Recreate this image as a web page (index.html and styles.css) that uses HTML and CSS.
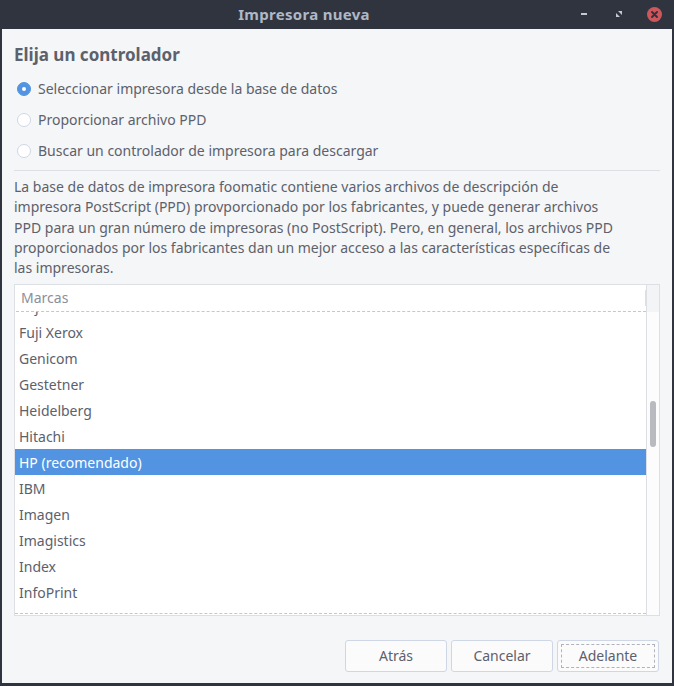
FILE: index.html
```html
<!DOCTYPE html>
<html lang="es">
<head>
<meta charset="utf-8">
<title>Impresora nueva</title>
<link rel="stylesheet" href="styles.css">
</head>
<body>
<div class="window">
  <header class="titlebar">
    <div class="title">Impresora nueva</div>
    <div class="controls">
      <span class="btn-min"></span>
      <svg class="btn-max" width="6" height="6" viewBox="0 0 6 6"><polygon points="2,0 6,0 6,4" fill="#c4cad3"/><polygon points="0,2 0,6 4,6" fill="#c4cad3"/></svg>
      <svg class="btn-close" width="15" height="15" viewBox="0 0 15 15"><circle cx="7.5" cy="7.5" r="7.5" fill="#cc575d"/><path d="M5 5 L10 10 M10 5 L5 10" stroke="#2f343f" stroke-width="2" stroke-linecap="round"/></svg>
    </div>
  </header>
  <main class="content">
    <h1 class="heading">Elija un controlador</h1>
    <div class="radios">
      <label class="radio"><span class="dot checked"></span>Seleccionar impresora desde la base de datos</label>
      <label class="radio"><span class="dot"></span>Proporcionar archivo PPD</label>
      <label class="radio"><span class="dot"></span>Buscar un controlador de impresora para descargar</label>
    </div>
    <div class="sep"></div>
    <p class="desc">La base de datos de impresora foomatic contiene varios archivos de descripción de<br>impresora PostScript (PPD) provporcionado por los fabricantes, y puede generar archivos<br>PPD para un gran número de impresoras (no PostScript). Pero, en general, los archivos PPD<br>proporcionados por los fabricantes dan un mejor acceso a las características específicas de<br>las impresoras.</p>
    <div class="listbox">
      <div class="list-main">
        <div class="list-header"><span class="col">Marcas</span></div>
        <div class="viewport">
          <ul class="rows">
            <li>Fujifilm</li>
            <li>Fuji Xerox</li>
            <li>Genicom</li>
            <li>Gestetner</li>
            <li>Heidelberg</li>
            <li>Hitachi</li>
            <li class="selected">HP (recomendado)</li>
            <li>IBM</li>
            <li>Imagen</li>
            <li>Imagistics</li>
            <li>Index</li>
            <li>InfoPrint</li>
            <li>Infotec</li>
          </ul>
        </div>
      </div>
      <div class="scrollbar">
        <div class="sb-head"></div>
        <div class="sb-track"><div class="thumb"></div></div>
      </div>
    </div>
    <div class="buttons">
      <button class="button">Atrás</button>
      <button class="button">Cancelar</button>
      <button class="button focus"><span class="ring">Adelante</span></button>
    </div>
  </main>
</div>
</body>
</html>
```
FILE: styles.css
```css
* { box-sizing: border-box; }
html, body { margin: 0; padding: 0; }
body {
  width: 674px;
  height: 686px;
  overflow: hidden;
  font-family: "Noto Sans", "Open Sans", sans-serif;
  font-size: 14px;
  color: #5c616c;
  background: #2f343f;
}
.window {
  width: 674px;
  height: 686px;
  display: flex;
  flex-direction: column;
  background: #2f343f;
}
.titlebar {
  height: 29px;
  display: flex;
  align-items: center;
  flex: none;
}
.title {
  flex: 1;
  text-align: center;
  padding-left: 35px;
  font-weight: bold;
  font-size: 15px;
  letter-spacing: 0.3px;
  color: #afb8c5;
  line-height: 29px;
}
.controls {
  width: 101px;
  height: 29px;
  display: flex;
  align-items: center;
}
.btn-min {
  display: block;
  width: 6px;
  height: 2px;
  background: #c4cad3;
  margin-left: 8px;
  margin-top: -1px;
}
.btn-max {
  display: block;
  margin-left: 29px;
  margin-top: -2px;
}
.btn-close {
  display: block;
  margin-left: 25px;
  margin-top: -1px;
}
.content {
  flex: 1;
  margin: 0 2px 3px 2px;
  background: #f5f6f7;
  padding: 14px 12px 0 12px;
  display: flex;
  flex-direction: column;
}
.heading {
  margin: 0;
  font-size: 17px;
  line-height: 23px;
  font-weight: bold;
  color: #5c616c;
}
.radios {
  margin-top: 7px;
  display: flex;
  flex-direction: column;
}
.radio {
  height: 31px;
  display: flex;
  align-items: center;
  padding-left: 3px;
}
.dot {
  width: 14px;
  height: 14px;
  border-radius: 50%;
  border: 1px solid #cfd6e6;
  background: #ffffff;
  margin-right: 7px;
  flex: none;
  display: flex;
  align-items: center;
  justify-content: center;
}
.dot.checked {
  background: #5294e2;
  border-color: #5294e2;
}
.dot.checked::after {
  content: "";
  width: 4px;
  height: 4px;
  border-radius: 50%;
  background: #ffffff;
}
.sep {
  height: 1px;
  background: #dcdfe3;
  margin-top: 4px;
}
.desc {
  margin: 6px 0 0 0;
  line-height: 20.25px;
}
.listbox {
  margin-top: 5.5px;
  height: 332px;
  border: 1px solid #dcdfe3;
  display: flex;
  background: #ffffff;
}
.list-main {
  flex: 1;
  display: flex;
  flex-direction: column;
  padding-bottom: 1px;
}
.list-header {
  height: 27px;
  border-bottom: 1px dashed #c4c7cc;
  display: flex;
  align-items: center;
  position: relative;
  margin-left: 1px;
}
.list-header::after {
  content: "";
  position: absolute;
  right: 0;
  top: 5px;
  height: 16px;
  width: 1px;
  background: #dcdfe3;
}
.col {
  padding-left: 5px;
  color: #8a8f99;
}
.viewport {
  flex: 1;
  overflow: hidden;
  border-bottom: 1px dashed #c4c7cc;
}
.rows {
  list-style: none;
  margin: -19px 0 0 0;
  padding: 0;
}
.rows li {
  height: 26px;
  line-height: 27px;
  padding-left: 4px;
  color: #5c616c;
}
.rows li.selected {
  background: #5294e2;
  color: #ffffff;
}
.scrollbar {
  width: 13px;
  border-left: 1px solid #dcdfe3;
  display: flex;
  flex-direction: column;
}
.sb-head {
  height: 27px;
  background: #f3f4f6;
}
.sb-track {
  flex: 1;
  background: #fcfcfc;
  padding-left: 3px;
}
.thumb {
  margin-top: 89px;
  width: 6px;
  height: 46px;
  border-radius: 3px;
  background: #b8babf;
}
.buttons {
  margin-top: 24px;
  margin-right: 1px;
  display: flex;
  justify-content: flex-end;
  gap: 4px;
}
.button {
  width: 102px;
  height: 32px;
  border: 1px solid #cfd6e6;
  border-radius: 3px;
  background: #fbfbfc;
  font-family: "Noto Sans", "Open Sans", sans-serif;
  font-size: 14px;
  color: #5c616c;
  padding: 0;
  display: flex;
  align-items: center;
  justify-content: center;
}
.button.focus {
  padding: 3px;
}
.ring {
  width: 100%;
  height: 100%;
  border: 1px dashed #b0b4ba;
  display: flex;
  align-items: center;
  justify-content: center;
}
```
